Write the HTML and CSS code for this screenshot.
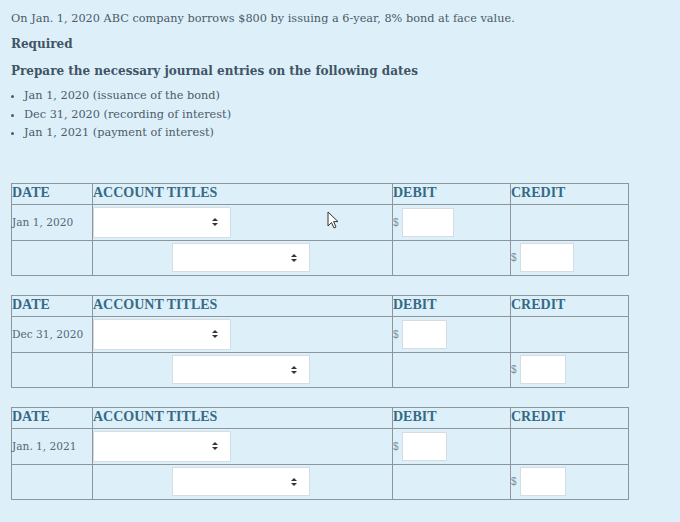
FILE: index.html
```html
<!DOCTYPE html>
<html>
<head>
<meta charset="utf-8">
<link rel="stylesheet" href="styles.css">
</head>
<body>
<div class="page">
  <p class="intro">On Jan. 1, 2020 ABC company borrows $800 by issuing a 6-year, 8% bond at face value.</p>
  <p class="req">Required</p>
  <p class="prep">Prepare the necessary journal entries on the following dates</p>
  <ul class="dates">
    <li>Jan 1, 2020 (issuance of the bond)</li>
    <li>Dec 31, 2020 (recording of interest)</li>
    <li>Jan 1, 2021 (payment of interest)</li>
  </ul>

  <table class="je">
    <tr class="head"><th class="c-date">DATE</th><th class="c-acct">ACCOUNT TITLES</th><th class="c-amt">DEBIT</th><th class="c-amt">CREDIT</th></tr>
    <tr class="r1">
      <td class="date">Jan 1, 2020</td>
      <td><div class="sel"><span class="arr"></span></div></td>
      <td><div class="money"><span class="dol">$</span><span class="box w52"></span></div></td>
      <td></td>
    </tr>
    <tr class="r2">
      <td></td>
      <td><div class="sel indent"><span class="arr"></span></div></td>
      <td></td>
      <td><div class="money"><span class="dol">$</span><span class="box w54"></span></div></td>
    </tr>
  </table>

  <table class="je">
    <tr class="head"><th class="c-date">DATE</th><th class="c-acct">ACCOUNT TITLES</th><th class="c-amt">DEBIT</th><th class="c-amt">CREDIT</th></tr>
    <tr class="r1">
      <td class="date">Dec 31, 2020</td>
      <td><div class="sel"><span class="arr"></span></div></td>
      <td><div class="money"><span class="dol">$</span><span class="box w45"></span></div></td>
      <td></td>
    </tr>
    <tr class="r2">
      <td></td>
      <td><div class="sel indent"><span class="arr"></span></div></td>
      <td></td>
      <td><div class="money"><span class="dol">$</span><span class="box w46"></span></div></td>
    </tr>
  </table>

  <table class="je">
    <tr class="head"><th class="c-date">DATE</th><th class="c-acct">ACCOUNT TITLES</th><th class="c-amt">DEBIT</th><th class="c-amt">CREDIT</th></tr>
    <tr class="r1">
      <td class="date">Jan. 1, 2021</td>
      <td><div class="sel"><span class="arr"></span></div></td>
      <td><div class="money"><span class="dol">$</span><span class="box w45"></span></div></td>
      <td></td>
    </tr>
    <tr class="r2">
      <td></td>
      <td><div class="sel indent"><span class="arr"></span></div></td>
      <td></td>
      <td><div class="money"><span class="dol">$</span><span class="box w46"></span></div></td>
    </tr>
  </table>

  <svg class="cursor" width="12" height="19" viewBox="0 0 12 19"><path d="M1 1 L1 15 L4.5 11.5 L7 17 L9 16 L6.6 10.6 L11 10.6 Z" fill="#fff" stroke="#333" stroke-width="1"/></svg>
</div>
</body>
</html>
```

FILE: styles.css
```css
html, body {
  margin: 0;
  padding: 0;
  background: #ddf0f9;
}
.page {
  position: relative;
  padding: 11px 0 0 11px;
  width: 680px;
  height: 522px;
  box-sizing: border-box;
  font-family: "DejaVu Serif", serif;
  font-size: 11.3px;
  color: #4b5b69;
}
p { margin: 0; }
.intro { line-height: 16px; }
.req { margin-top: 9px; font-weight: bold; font-size: 12px; line-height: 16px; color: #3f5465; }
.prep { margin-top: 11px; font-weight: bold; font-size: 12px; line-height: 16px; color: #3f5465; }
.dates {
  margin: 8px 0 0 0;
  padding: 0 0 0 13px;
  line-height: 18.5px;
}
.je {
  border-collapse: collapse;
  width: 618px;
  table-layout: fixed;
  margin-top: 19px;
}
.dates + .je { margin-top: 40px; }
.je th, .je td {
  border: 1px solid #8d969c;
  padding: 0;
  vertical-align: middle;
}
.c-date { width: 80px; }
.c-acct { width: 299px; }
.c-amt { width: 117px; }
.je th {
  height: 19px;
  text-align: left;
  font-family: "Liberation Serif", serif;
  font-weight: bold;
  font-size: 14px;
  line-height: 16px;
  color: #356a85;
  vertical-align: top;
  padding-top: 1px;
}
.r1 td { height: 35px; }
.r2 td { height: 34px; }
.date { font-size: 10.6px; color: #52687a; }
.sel {
  position: relative;
  width: 138px;
  height: 31px;
  box-sizing: border-box;
  background: #fff;
  border: 1px solid #d3dde3;
}
.sel.indent { margin-left: 79px; height: 29px; }
.arr {
  position: absolute;
  right: 15px;
  top: 50%;
  width: 0;
  height: 0;
}
.arr::before, .arr::after {
  content: "";
  position: absolute;
  left: -3px;
  border-left: 3px solid transparent;
  border-right: 3px solid transparent;
}
.arr::before { top: -4px; border-bottom: 3px solid #333; }
.arr::after { top: 1px; border-top: 3px solid #333; }
.money {
  display: flex;
  align-items: center;
  gap: 3px;
}
.dol {
  font-family: "Liberation Sans", sans-serif;
  font-size: 10px;
  color: #7d8b95;
}
.box {
  display: block;
  height: 29px;
  box-sizing: border-box;
  background: #fff;
  border: 1px solid #d3dde3;
}
.w52 { width: 52px; }
.w54 { width: 54px; }
.w45 { width: 45px; }
.w46 { width: 46px; }
.cursor {
  position: absolute;
  left: 327px;
  top: 211px;
}
```
